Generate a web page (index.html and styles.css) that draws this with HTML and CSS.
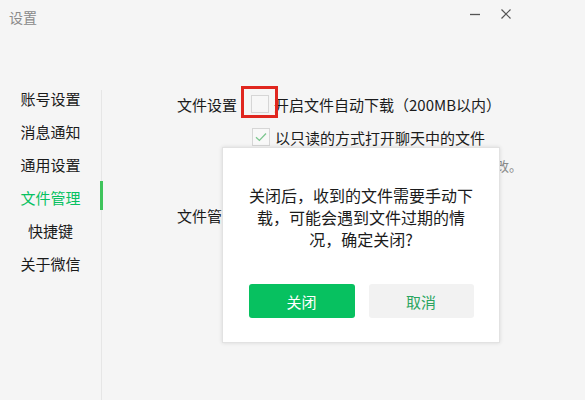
FILE: index.html
```html
<!DOCTYPE html>
<html lang="zh-CN">
<head>
<meta charset="utf-8">
<title>设置</title>
<link rel="stylesheet" href="styles.css">
</head>
<body>
<div class="window">
  <header class="titlebar">
    <span class="title">设置</span>
    <div class="controls">
      <svg class="ctl" width="12" height="12" viewBox="0 0 12 12"><path d="M1 6.5h10" stroke="#555" stroke-width="1.3"/></svg>
      <svg class="ctl" width="12" height="12" viewBox="0 0 12 12"><path d="M1.5 1.5l9 9M10.5 1.5l-9 9" stroke="#555" stroke-width="1.2"/></svg>
    </div>
  </header>
  <div class="main">
    <nav class="sidebar">
      <div class="nav-item">账号设置</div>
      <div class="nav-item">消息通知</div>
      <div class="nav-item">通用设置</div>
      <div class="nav-item active">文件管理</div>
      <div class="nav-item">快捷键</div>
      <div class="nav-item">关于微信</div>
    </nav>
    <div class="divider"></div>
    <section class="content">
      <div class="row row-first">
        <span class="label">文件设置</span>
        <span class="checkbox-wrap">
          <span class="checkbox"></span>
          <span class="highlight"></span>
        </span>
        <span class="opt-text">开启文件自动下载（200MB以内）</span>
      </div>
      <div class="row row-sub">
        <span class="checkbox checked">
          <svg width="12" height="10" viewBox="0 0 12 10"><path d="M1 5.2l3.4 3.2L11 1.5" fill="none" stroke="#7cc68f" stroke-width="1.3"/></svg>
        </span>
        <span class="opt-text">以只读的方式打开聊天中的文件</span>
      </div>
      <div class="row row-hint">
        <span class="hint">开启后，文件以只读方式打开，不可修改。</span>
      </div>
      <div class="row row-manage">
        <span class="label">文件管理</span>
      </div>
    </section>
  </div>

  <div class="dialog">
    <p class="dialog-text">关闭后，收到的文件需要手动下载，可能会遇到文件过期的情况，确定关闭?</p>
    <div class="dialog-actions">
      <button class="btn btn-primary">关闭</button>
      <button class="btn btn-secondary">取消</button>
    </div>
  </div>
</div>
</body>
</html>
```
FILE: styles.css
```css
* { box-sizing: border-box; }
html, body {
  margin: 0;
  padding: 0;
  width: 585px;
  height: 400px;
  overflow: hidden;
  background: #f5f5f5;
  font-family: "Noto Sans CJK SC", "Noto Sans", sans-serif;
  color: #1b1b1b;
}
.window {
  position: relative;
  width: 585px;
  height: 400px;
}
.titlebar {
  height: 82px;
  display: flex;
  justify-content: space-between;
  align-items: flex-start;
  padding: 7px 0 0 9px;
}
.title {
  font-size: 14px;
  line-height: 20px;
  color: #8a8a8a;
}
.controls {
  display: flex;
  gap: 19px;
  padding-top: 1px;
  margin-right: 73px;
}
.ctl { display: block; }

.main {
  display: flex;
  height: 318px;
}
.sidebar {
  width: 101px;
  display: flex;
  flex-direction: column;
}
.nav-item {
  position: relative;
  height: 33px;
  line-height: 33px;
  font-size: 15px;
  text-align: center;
  color: #1b1b1b;
}
.nav-item.active { color: #07c160; }
.nav-item.active::after {
  content: "";
  position: absolute;
  right: -2px;
  top: 0;
  width: 3px;
  height: 29px;
  background: #3fc45c;
}
.divider {
  width: 1px;
  margin-top: 8px;
  background: #e6e6e6;
}
.content {
  flex: 1;
  padding: 10px 0 0 75px;
  display: flex;
  flex-direction: column;
}
.row {
  display: flex;
  align-items: center;
}
.row-first { height: 24px; }
.row-sub { height: 24px; margin-top: 9px; padding-left: 75px; }
.row-hint { height: 20px; margin-top: 6px; padding-left: 98px; }
.row-manage { height: 24px; margin-top: 28px; }
.label {
  font-size: 15px;
  width: 60px;
  white-space: nowrap;
}
.opt-text {
  font-size: 15px;
  white-space: nowrap;
  margin-left: 5px;
}
.hint {
  font-size: 13px;
  color: #8a8a8a;
  white-space: nowrap;
}
.checkbox-wrap {
  position: relative;
  margin-left: 14px;
  display: flex;
}
.checkbox {
  width: 18px;
  height: 18px;
  border: 1px solid #d6d6d6;
  background: #f7f7f7;
  display: flex;
  align-items: center;
  justify-content: center;
}
.checkbox.checked { background: #f8f8f8; }
.highlight {
  position: absolute;
  left: -10px;
  top: -9px;
  width: 37px;
  height: 32px;
  border: 3px solid #e0261f;
}

.dialog {
  position: absolute;
  left: 222px;
  top: 147px;
  width: 278px;
  height: 196px;
  background: #ffffff;
  border: 1px solid #e2e2e2;
  box-shadow: 0 0 4px rgba(0, 0, 0, 0.12);
  display: flex;
  flex-direction: column;
  align-items: center;
  padding-top: 36px;
}
.dialog-text {
  margin: 0;
  width: 232px;
  font-size: 16px;
  line-height: 22px;
  text-align: center;
  color: #1b1b1b;
}
.dialog-actions {
  display: flex;
  gap: 14px;
  margin-top: 34px;
}
.btn {
  width: 106px;
  height: 34px;
  border: none;
  border-radius: 3px;
  font-family: inherit;
  font-size: 15px;
  padding: 0;
}
.btn-primary {
  background: #07c160;
  color: #ffffff;
}
.btn-secondary {
  width: 105px;
  background: #f2f2f2;
  color: #2aa560;
}
```
